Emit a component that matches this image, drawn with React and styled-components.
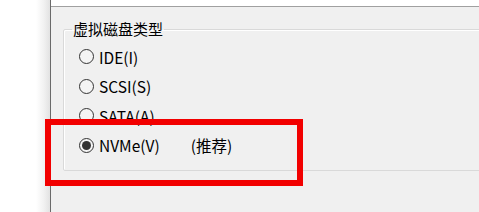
import React from 'react'
import styled, { createGlobalStyle } from 'styled-components'

const GlobalStyle = createGlobalStyle`
  html, body {
    margin: 0;
    padding: 0;
    background: #f0f0f0;
  }
  body {
    font-family: 'Noto Sans CJK SC', 'Noto Sans', sans-serif;
  }
`

const options = [
  { label: 'IDE(I)' },
  { label: 'SCSI(S)' },
  { label: 'SATA(A)' },
  { label: 'NVMe(V)', note: '(推荐)', checked: true },
]

export default function App() {
  return (
    <Window>
      <GlobalStyle />
      <SidePane />
      <Content>
        <TopStrip />
        <Panel>
          <GroupBox>
            <Legend>虚拟磁盘类型</Legend>
            <OptionList>
              {options.map((opt) => (
                <OptionRow key={opt.label}>
                  <Radio $checked={opt.checked} />
                  <OptionLabel>{opt.label}</OptionLabel>
                  {opt.note && <Note>{opt.note}</Note>}
                </OptionRow>
              ))}
            </OptionList>
          </GroupBox>
        </Panel>
      </Content>
      <Highlight />
    </Window>
  )
}

const Window = styled.div`
  position: relative;
  display: flex;
  width: 479px;
  height: 212px;
  overflow: hidden;
  background: #f0f0f0;
`

const SidePane = styled.div`
  width: 50px;
  flex-shrink: 0;
  background: linear-gradient(to right, #ffffff 0, #ffffff 36px, #f1f1f1 44px, #e2e2e2 50px);
  border-right: 1px solid #6a6a6a;
`

const Content = styled.div`
  flex: 1;
  display: flex;
  flex-direction: column;
  overflow: hidden;
`

const TopStrip = styled.div`
  height: 6px;
  background: #ffffff;
  border-bottom: 1px solid #a0a0a0;
`

const Panel = styled.div`
  flex: 1;
  padding: 12px 0 0 12px;
  background: #f0f0f0;
`

const GroupBox = styled.fieldset`
  margin: 0 -30px 0 0;
  padding: 3px 0 10px 8px;
  border: 1px solid #d9d9d9;
  border-radius: 2px;
  box-shadow: inset 1px 1px 0 #ffffff;
`

const Legend = styled.legend`
  padding: 0 1px;
  font-size: 15px;
  line-height: 20px;
  color: #000;
`

const OptionList = styled.div`
  display: flex;
  flex-direction: column;
  padding-left: 7px;
`

const OptionRow = styled.div`
  display: flex;
  align-items: center;
  height: 29.5px;
  font-size: 15.5px;
  color: #000;
`

const Radio = styled.span`
  position: relative;
  width: 13px;
  height: 13px;
  border: 1px solid #333333;
  border-radius: 50%;
  background: #f4f4f4;
  flex-shrink: 0;

  &::after {
    content: '';
    display: ${(p) => (p.$checked ? 'block' : 'none')};
    position: absolute;
    left: 2px;
    top: 2px;
    width: 9px;
    height: 9px;
    border-radius: 50%;
    background: #333333;
  }
`

const OptionLabel = styled.span`
  margin-left: 5px;
  line-height: 20px;
`

const Note = styled.span`
  margin-left: 31px;
  line-height: 20px;
`

const Highlight = styled.div`
  position: absolute;
  left: 45px;
  top: 119px;
  width: 246px;
  height: 55px;
  border: 6px solid #f20000;
  pointer-events: none;
`
